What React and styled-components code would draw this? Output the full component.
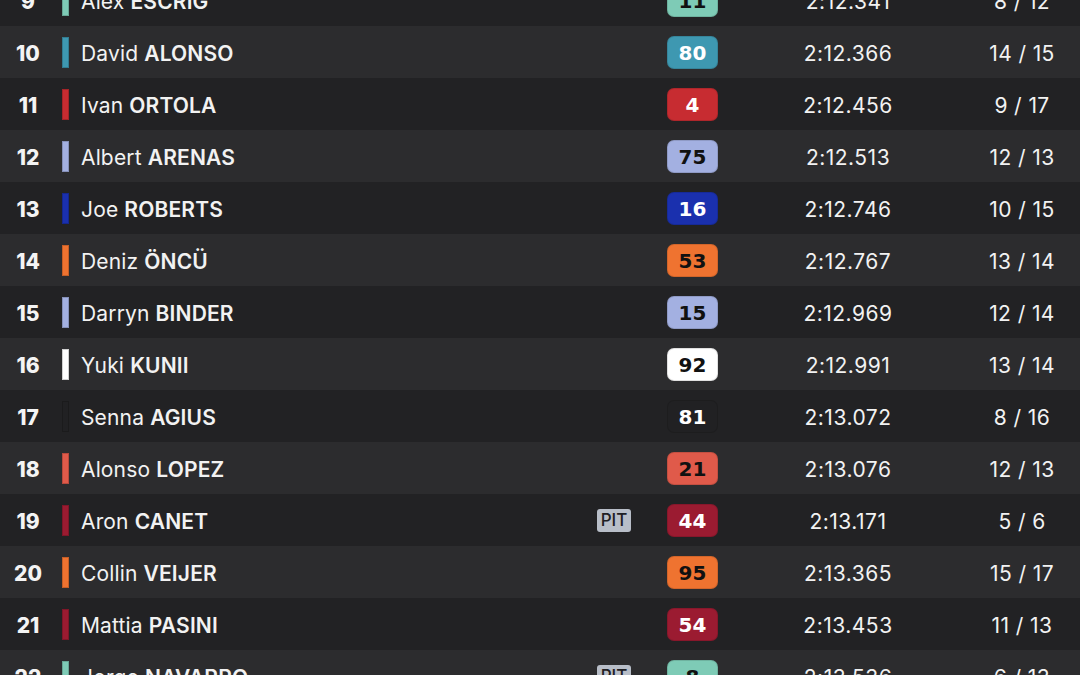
import React from "react";
import styled, { createGlobalStyle } from "styled-components";

const Global = createGlobalStyle`
  html, body { margin: 0; padding: 0; background: #222224; overflow: hidden; }
  body { font-family: Inter, "Open Sans", sans-serif; color: #f2f2f2; }
`;

const Table = styled.div`
  display: flex;
  flex-direction: column;
  margin-top: -26px;
`;

const Row = styled.div`
  display: grid;
  grid-template-columns: 56px 25px 1fr 34px 36px 51px 260px 88px;
  padding-right: 14px;
  height: 52px;
  align-items: center;
  background: ${(p) => (p.$alt ? "#2c2c2e" : "#222224")};
`;

const Pos = styled.div`
  text-align: center;
  font-family: Inter, sans-serif;
  font-weight: 800;
  font-size: 21px;
  color: #f4f4f4;
  padding-top: 2px;
`;

const Bar = styled.div`
  width: 7px;
  height: 31px;
  margin-left: 6px;
  box-sizing: border-box;
  background: ${(p) => p.$c};
  border: 1px solid rgba(0, 0, 0, 0.18);
`;

const Name = styled.div`
  font-size: 21px;
  font-weight: 400;
  color: #f2f2f2;
  white-space: nowrap;
  letter-spacing: 0.15px;
  padding-top: 2px;
  b { font-weight: 600; }
`;

const Pit = styled.div`
  width: 34px;
  height: 23px;
  box-sizing: border-box;
  border-radius: 3px;
  background: #b8bec8;
  color: #1f2024;
  font-size: 17px;
  font-weight: 500;
  display: flex;
  align-items: center;
  justify-content: center;
`;

const Badge = styled.div`
  grid-column: 6;
  width: 51px;
  height: 33px;
  box-sizing: border-box;
  border-radius: 7px;
  background: ${(p) => p.$bg};
  color: ${(p) => p.$fg};
  border: 1px solid rgba(0, 0, 0, 0.12);
  font-family: "DejaVu Sans", sans-serif;
  font-weight: 700;
  font-size: 20px;
  display: flex;
  align-items: center;
  justify-content: center;
  padding-top: 2px;
`;

const Time = styled.div`
  grid-column: 7;
  text-align: center;
  font-size: 21px;
  letter-spacing: 0.5px;
  color: #f2f2f2;
  padding-top: 2px;
`;

const Laps = styled.div`
  text-align: center;
  font-size: 21px;
  letter-spacing: 0.4px;
  color: #f2f2f2;
  padding-top: 2px;
`;

const rows = [
  { p: 9, f: "Alex", l: "ESCRIG", c: "#7ecbb6", fg: "#111", n: 11, t: "2:12.341", laps: "8 / 12" },
  { p: 10, f: "David", l: "ALONSO", c: "#3e98b1", fg: "#fff", n: 80, t: "2:12.366", laps: "14 / 15" },
  { p: 11, f: "Ivan", l: "ORTOLA", c: "#c72c31", fg: "#fff", n: 4, t: "2:12.456", laps: "9 / 17" },
  { p: 12, f: "Albert", l: "ARENAS", c: "#a3b0e1", fg: "#111", n: 75, t: "2:12.513", laps: "12 / 13" },
  { p: 13, f: "Joe", l: "ROBERTS", c: "#1a30ae", fg: "#fff", n: 16, t: "2:12.746", laps: "10 / 15" },
  { p: 14, f: "Deniz", l: "ÖNCÜ", c: "#ef7330", fg: "#111", n: 53, t: "2:12.767", laps: "13 / 14" },
  { p: 15, f: "Darryn", l: "BINDER", c: "#a3b0e1", fg: "#111", n: 15, t: "2:12.969", laps: "12 / 14" },
  { p: 16, f: "Yuki", l: "KUNII", c: "#ffffff", fg: "#111", n: 92, t: "2:12.991", laps: "13 / 14" },
  { p: 17, f: "Senna", l: "AGIUS", c: "#212123", fg: "#fff", n: 81, t: "2:13.072", laps: "8 / 16" },
  { p: 18, f: "Alonso", l: "LOPEZ", c: "#e05a4a", fg: "#111", n: 21, t: "2:13.076", laps: "12 / 13" },
  { p: 19, f: "Aron", l: "CANET", c: "#9b1b31", fg: "#fff", n: 44, t: "2:13.171", laps: "5 / 6", pit: true },
  { p: 20, f: "Collin", l: "VEIJER", c: "#ef7330", fg: "#111", n: 95, t: "2:13.365", laps: "15 / 17" },
  { p: 21, f: "Mattia", l: "PASINI", c: "#9b1b31", fg: "#fff", n: 54, t: "2:13.453", laps: "11 / 13" },
  { p: 22, f: "Jorge", l: "NAVARRO", c: "#7ecbb6", fg: "#111", n: 8, t: "2:13.536", laps: "6 / 13", pit: true },
];

export default function App() {
  return (
    <>
      <Global />
      <Table>
        {rows.map((r) => (
          <Row key={r.p} $alt={r.p % 2 === 0}>
            <Pos>{r.p}</Pos>
            <Bar $c={r.c} />
            <Name>
              {r.f} <b>{r.l}</b>
            </Name>
            {r.pit ? <Pit>PIT</Pit> : null}
            <Badge $bg={r.c} $fg={r.fg}>{r.n}</Badge>
            <Time>{r.t}</Time>
            <Laps>{r.laps}</Laps>
          </Row>
        ))}
      </Table>
    </>
  );
}
